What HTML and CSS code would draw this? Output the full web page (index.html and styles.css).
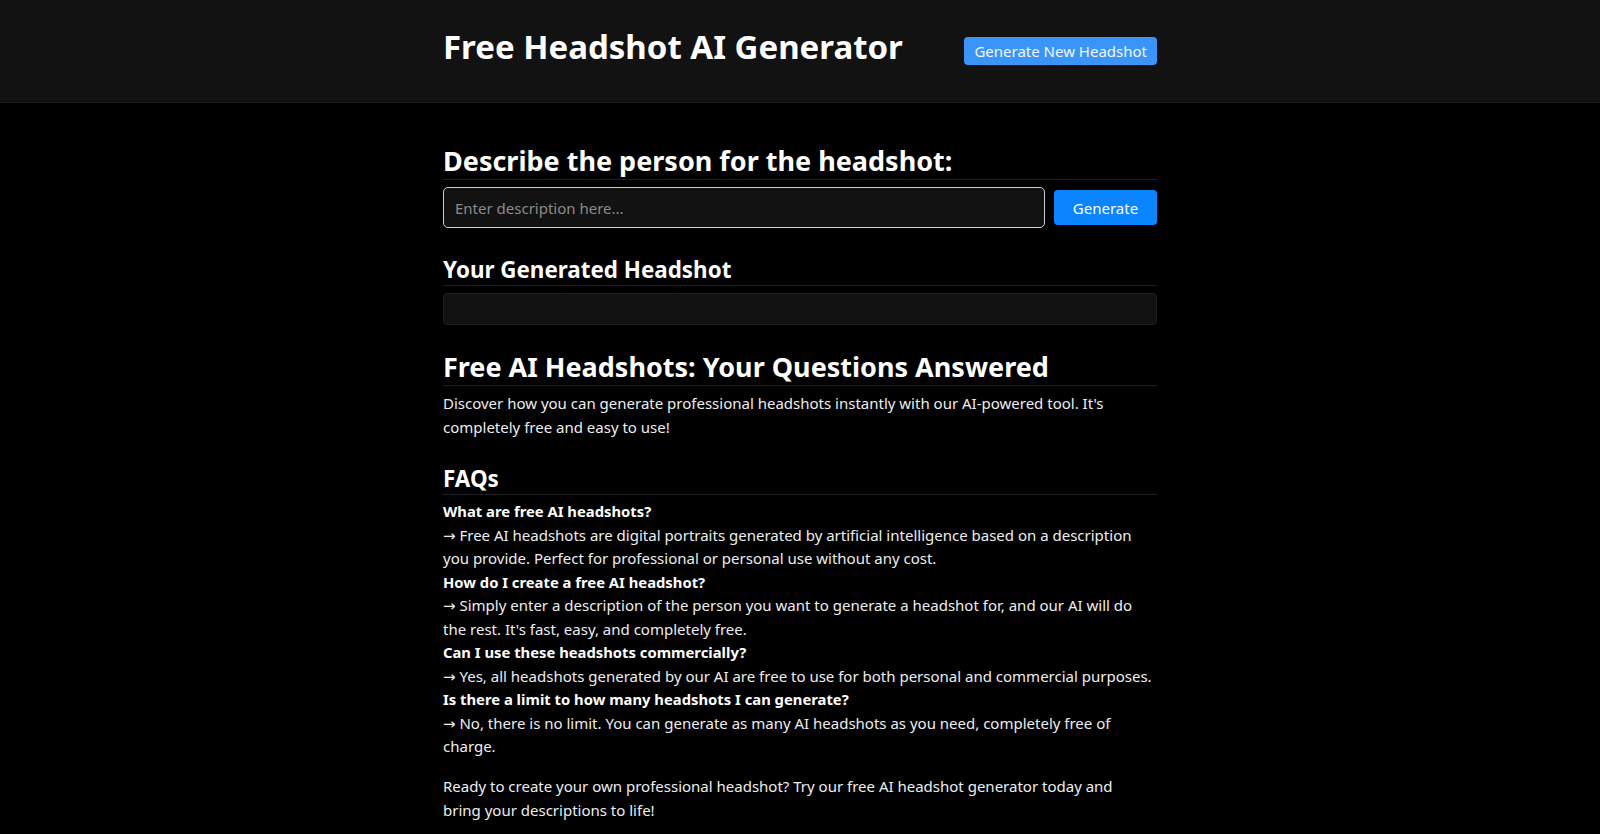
FILE: index.html
```html
<!DOCTYPE html>
<html lang="en">
<head>
<meta charset="utf-8">
<title>Free Headshot AI Generator</title>
<link rel="stylesheet" href="styles.css">
</head>
<body>
<header class="site-header">
  <div class="header-inner">
    <h1 class="site-title">Free Headshot AI Generator</h1>
    <button class="btn-new">Generate New Headshot</button>
  </div>
</header>
<main class="content">
  <h2 class="section-title first">Describe the person for the headshot:</h2>
  <div class="prompt-row">
    <input class="prompt-input" type="text" placeholder="Enter description here...">
    <button class="btn-generate">Generate</button>
  </div>

  <h3 class="sub-title result-title">Your Generated Headshot</h3>
  <div class="result-box"></div>

  <h2 class="section-title faq-intro">Free AI Headshots: Your Questions Answered</h2>
  <p class="intro-text">Discover how you can generate professional headshots instantly with our AI-powered tool. It's completely free and easy to use!</p>

  <h3 class="sub-title faq-title">FAQs</h3>
  <div class="faq-list">
    <div class="faq-q">What are free AI headshots?</div>
    <div class="faq-a">→ Free AI headshots are digital portraits generated by artificial intelligence based on a description you provide. Perfect for professional or personal use without any cost.</div>
    <div class="faq-q">How do I create a free AI headshot?</div>
    <div class="faq-a">→ Simply enter a description of the person you want to generate a headshot for, and our AI will do the rest. It's fast, easy, and completely free.</div>
    <div class="faq-q">Can I use these headshots commercially?</div>
    <div class="faq-a">→ Yes, all headshots generated by our AI are free to use for both personal and commercial purposes.</div>
    <div class="faq-q">Is there a limit to how many headshots I can generate?</div>
    <div class="faq-a">→ No, there is no limit. You can generate as many AI headshots as you need, completely free of charge.</div>
  </div>
  <p class="closing-text">Ready to create your own professional headshot? Try our free AI headshot generator today and bring your descriptions to life!</p>
</main>
</body>
</html>
```
FILE: styles.css
```css
* { box-sizing: border-box; }

body {
  margin: 0;
  background: #000;
  color: #eeeeee;
  font-family: "Noto Sans", "DejaVu Sans", sans-serif;
  font-size: 15px;
  line-height: 23.5px;
}

.site-header {
  height: 103px;
  background: #121212;
  border-bottom: 1px solid #1c1c1c;
}

.header-inner {
  width: 714px;
  height: 100%;
  margin: 0 auto;
  display: flex;
  align-items: center;
  justify-content: space-between;
}

.site-title {
  margin: 0 0 8px 0;
  font-size: 33px;
  line-height: 40px;
  font-weight: 700;
  color: #fff;
}

.btn-new {
  height: 28px;
  padding: 0 10px;
  border: none;
  border-radius: 4px;
  background: #3b95f9;
  color: #f2f7ff;
  font-family: inherit;
  font-size: 15px;
  line-height: 28px;
  cursor: pointer;
}

.content {
  width: 714px;
  margin: 0 auto;
  padding-bottom: 40px;
}

.section-title {
  margin: 26px 0 0 0;
  padding-bottom: 2px;
  font-size: 27px;
  line-height: 32px;
  font-weight: 700;
  color: #fff;
  border-bottom: 1px solid #1f1f1f;
}

.section-title.first { margin-top: 42px; }

.prompt-row {
  margin-top: 7px;
  display: flex;
  align-items: center;
  gap: 9px;
}

.prompt-input {
  flex: 1;
  height: 41px;
  padding: 0 11px;
  background: #121212;
  border: 1px solid #cfcfcf;
  border-radius: 5px;
  color: #eee;
  font-family: inherit;
  font-size: 15px;
  outline: none;
}

.prompt-input::placeholder { color: #8a8a8a; }

.btn-generate {
  width: 103px;
  height: 35px;
  border: none;
  border-radius: 4px;
  background: #0a84ff;
  color: #fff;
  font-family: inherit;
  font-size: 15px;
  cursor: pointer;
}

.sub-title {
  margin: 29px 0 0 0;
  padding-bottom: 2px;
  font-size: 22.4px;
  line-height: 26px;
  font-weight: 700;
  color: #fff;
  border-bottom: 1px solid #1f1f1f;
}

.sub-title.faq-title { margin-top: 27px; }

.result-box {
  margin-top: 7px;
  height: 32px;
  background: #121212;
  border: 1px solid #1e1e1e;
  border-radius: 4px;
}

.intro-text {
  margin: 6px 0 0 0;
}

.faq-list {
  margin-top: 5px;
}

.faq-q {
  font-weight: 700;
  font-size: 14.8px;
  color: #fff;
}

.closing-text {
  margin: 16.5px 0 0 0;
  padding-right: 16px;
}
```
